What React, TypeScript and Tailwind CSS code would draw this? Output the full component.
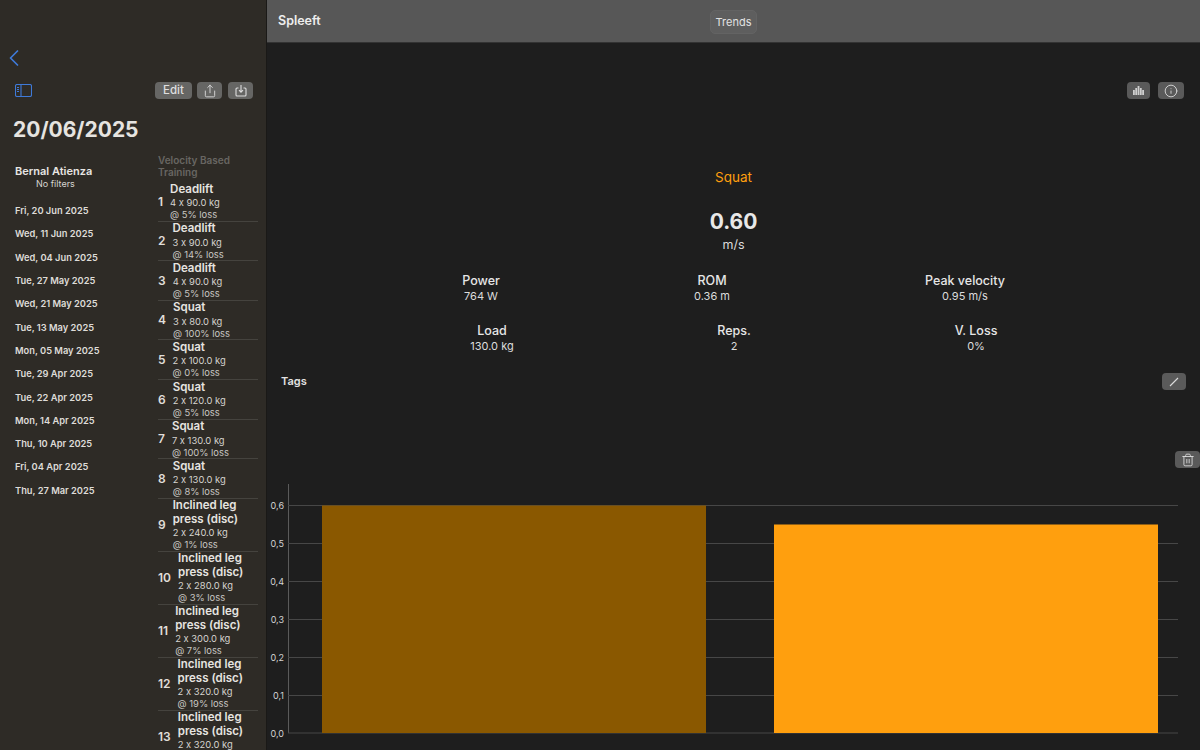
import { ChevronLeft, Info, Share, Trash2 } from "lucide-react";
import type { ReactNode } from "react";

const DATES = [
  "Fri, 20 Jun 2025",
  "Wed, 11 Jun 2025",
  "Wed, 04 Jun 2025",
  "Tue, 27 May 2025",
  "Wed, 21 May 2025",
  "Tue, 13 May 2025",
  "Mon, 05 May 2025",
  "Tue, 29 Apr 2025",
  "Tue, 22 Apr 2025",
  "Mon, 14 Apr 2025",
  "Thu, 10 Apr 2025",
  "Fri, 04 Apr 2025",
  "Thu, 27 Mar 2025",
];

const LEG = "Inclined leg press (disc)";
const SETS = [
  { name: "Deadlift", load: "4 x 90.0 kg", loss: "@ 5% loss" },
  { name: "Deadlift", load: "3 x 90.0 kg", loss: "@ 14% loss" },
  { name: "Deadlift", load: "4 x 90.0 kg", loss: "@ 5% loss" },
  { name: "Squat", load: "3 x 80.0 kg", loss: "@ 100% loss" },
  { name: "Squat", load: "2 x 100.0 kg", loss: "@ 0% loss" },
  { name: "Squat", load: "2 x 120.0 kg", loss: "@ 5% loss" },
  { name: "Squat", load: "7 x 130.0 kg", loss: "@ 100% loss" },
  { name: "Squat", load: "2 x 130.0 kg", loss: "@ 8% loss" },
  { name: LEG, load: "2 x 240.0 kg", loss: "@ 1% loss" },
  { name: LEG, load: "2 x 280.0 kg", loss: "@ 3% loss" },
  { name: LEG, load: "2 x 300.0 kg", loss: "@ 7% loss" },
  { name: LEG, load: "2 x 320.0 kg", loss: "@ 19% loss" },
  { name: LEG, load: "2 x 320.0 kg", loss: "" },
];

function IconButton({ className, children }: { className: string; children: ReactNode }) {
  return (
    <div className={`flex h-[17px] items-center justify-center rounded-[4px] text-[#dedede] ${className}`}>
      {children}
    </div>
  );
}

function Metric({ label, value, className = "" }: { label: string; value: string; className?: string }) {
  return (
    <div className={`flex flex-col items-center ${className}`}>
      <span className="text-[12.500px] leading-[16px] font-medium text-[#e6e6e6]">{label}</span>
      <span className="text-[11px] leading-[14px] text-[#dcdcdc]">{value}</span>
    </div>
  );
}

function Sidebar() {
  return (
    <aside className="flex h-[750px] w-[267px] shrink-0 flex-col overflow-hidden border-r border-[#1a1917] bg-[#2e2b26] text-[#e8e6e3]">
      <ChevronLeft className="mt-[44px] h-[28px] w-[28px] shrink-0 text-[#3f7ad8]" strokeWidth={1.5} />
      <div className="mt-[10px] flex h-[17px] shrink-0 items-center pr-[13px] pl-[15px]">
        <svg width="17" height="13" viewBox="0 0 17 13" fill="none" stroke="#3f7ad8" strokeWidth="1.1">
          <rect x="0.5" y="0.5" width="16" height="12" rx="1.5" />
          <path d="M6 0.5v12" />
          <path d="M2 3.5h2M2 5.5h2M2 7.5h2" />
        </svg>
        <IconButton className="ml-auto w-[37px] bg-[#666664] text-[11.500px] font-medium">Edit</IconButton>
        <IconButton className="ml-[5px] w-[25px] bg-[#666664]">
          <Share className="h-[14px] w-[14px]" strokeWidth={1.5} />
        </IconButton>
        <IconButton className="ml-[6px] w-[25px] bg-[#666664]">
          <svg width="12" height="13" viewBox="0 0 12 13" fill="none" stroke="currentColor" strokeWidth="1.1">
            <path d="M3.5 4H2a1 1 0 0 0-1 1v6a1 1 0 0 0 1 1h8a1 1 0 0 0 1-1V5a1 1 0 0 0-1-1H8.500" />
            <path d="M6 1v7M4 6.200 6 8.300l2-2.100" />
          </svg>
        </IconButton>
      </div>
      <h1 className="mt-[17px] ml-[13px] shrink-0 text-[21px] leading-[28px] font-bold text-[#e6e4e0]">20/06/2025</h1>
      <div className="mt-[10px] flex shrink-0">
        <div className="flex w-[158px] shrink-0 flex-col pt-[10px] pl-[15px]">
          <span className="text-[11px] leading-[14px] font-semibold text-[#e8e6e3]">Bernal Atienza</span>
          <span className="ml-[21px] text-[9px] leading-[12px] text-[#d8d6d2]">No filters</span>
          <div className="mt-[14px] flex flex-col">
            {DATES.map((d) => (
              <span key={d} className="h-[23.320px] text-[9.300px] leading-[14px] font-semibold text-[#dedcd8]">
                {d}
              </span>
            ))}
          </div>
        </div>
        <div className="flex w-[100px] shrink-0 flex-col">
          <div className="h-[28px] pt-[1px] text-[10px] leading-[11.500px] font-semibold text-[#686662]">
            Velocity Based Training
          </div>
          {SETS.map((s, i) => (
            <div key={i} className="flex items-center gap-[7px] border-b border-[#45433e] pt-[0.600px]">
              <span className="text-[12px] font-semibold text-[#e0ded9]">{i + 1}</span>
              <div className="flex min-w-0 flex-1 flex-col">
                <span className="text-[11.500px] leading-[13.400px] font-semibold text-[#e6e4e0]">{s.name}</span>
                <span className="text-[9.400px] leading-[13.100px] text-[#d6d4d0]">{s.load}</span>
                <span className="min-h-[11.500px] text-[9.400px] leading-[11.500px] text-[#c8c6c2]">{s.loss}</span>
              </div>
            </div>
          ))}
        </div>
      </div>
    </aside>
  );
}

function Chart() {
  const rows = [
    { label: "0,6", y: 505.5 },
    { label: "0,5", y: 543.5 },
    { label: "0,4", y: 581.5 },
    { label: "0,3", y: 619.5 },
    { label: "0,2", y: 657.5 },
    { label: "0,1", y: 695.5 },
    { label: "0,0", y: 733 },
  ];
  return (
    <svg width="933" height="282" viewBox="267 468 933 282" className="block" style={{ fontFamily: "Inter, sans-serif" }}>
      <path d="M288.500 484V733" stroke="#5a5a5a" />
      {rows.map((r) => (
        <g key={r.label}>
          <path d={`M288 ${r.y}H1178`} stroke="#474747" />
          <text x="284" y={r.y + 3.500} textAnchor="end" fontSize="9" fill="#d4d4d4">
            {r.label}
          </text>
        </g>
      ))}
      <rect x="322" y="505.500" width="384" height="227.500" fill="#8a5800" />
      <rect x="774" y="524.500" width="384" height="208.500" fill="#ff9f0e" />
    </svg>
  );
}

export default function App() {
  return (
    <div
      className="flex h-[750px] w-[1200px] overflow-hidden bg-[#1e1e1e] [font-feature-settings:'calt'_0]"
      style={{ fontFamily: "Inter, sans-serif" }}
    >
      <Sidebar />
      <main className="flex min-w-0 flex-1 flex-col">
        <header className="relative flex h-[43px] shrink-0 items-center border-b border-[#333333] bg-[#575757] pt-[1px] pl-[11px]">
          <span className="text-[12.500px] font-semibold text-[#eeeeee]">Spleeft</span>
          <div className="absolute top-[10px] left-[443px] flex h-[24px] w-[47px] items-center justify-center rounded-[5px] border border-[#636363] bg-[#5e5e5e] text-[11px] text-[#e2e2e2]">
            Trends
          </div>
        </header>
        <div className="mt-[39px] flex justify-end gap-[8px] pr-[16px]">
          <IconButton className="w-[23px] bg-[#5a5a5a]">
            <svg width="11" height="9" viewBox="0 0 11 9" fill="#cfcfcf">
              <rect x="0" y="4" width="1.800" height="5" />
              <rect x="2.300" y="2" width="1.800" height="7" />
              <rect x="4.600" y="0" width="1.800" height="9" />
              <rect x="6.900" y="2" width="1.800" height="7" />
              <rect x="9.200" y="4" width="1.800" height="5" />
            </svg>
          </IconButton>
          <IconButton className="w-[26px] bg-[#5a5a5a]">
            <Info className="h-[14px] w-[14px]" strokeWidth={1.5} />
          </IconButton>
        </div>
        <div className="mt-[69px] flex flex-col items-center">
          <span className="text-[13.500px] leading-[18px] text-[#ff9f0e]">Squat</span>
          <span className="mt-[22px] text-[21px] leading-[28px] font-bold text-[#e8e8e8]">0.60</span>
          <span className="mt-[1px] text-[12.500px] leading-[16px] text-[#dcdcdc]">m/s</span>
        </div>
        <div className="mt-[20px] ml-[104px] grid w-[726px] grid-cols-3">
          <Metric label="Power" value="764 W" className="pr-[22px]" />
          <Metric label="ROM" value="0.36 m" className="pr-[44px]" />
          <Metric label="Peak velocity" value="0.95 m/s" className="pr-[22px]" />
        </div>
        <div className="mt-[20px] ml-[104px] grid w-[726px] grid-cols-3">
          <Metric label="Load" value="130.0 kg" />
          <Metric label="Reps." value="2" />
          <Metric label="V. Loss" value="0%" />
        </div>
        <div className="mt-[20px] flex h-[17px] items-center justify-between px-[14px]">
          <span className="text-[11px] font-semibold text-[#e2e2e2]">Tags</span>
          <IconButton className="w-[24px] bg-[#5a5a5a]">
            <svg width="10" height="10" viewBox="0 0 10 10" stroke="currentColor" strokeWidth="1.100">
              <path d="M1 9 9 1" />
            </svg>
          </IconButton>
        </div>
        <div className="mt-[61px] flex justify-end">
          <IconButton className="w-[25px] bg-[#5a5a5a]">
            <Trash2 className="h-[14px] w-[14px]" strokeWidth={1.5} />
          </IconButton>
        </div>
        <Chart />
      </main>
    </div>
  );
}
